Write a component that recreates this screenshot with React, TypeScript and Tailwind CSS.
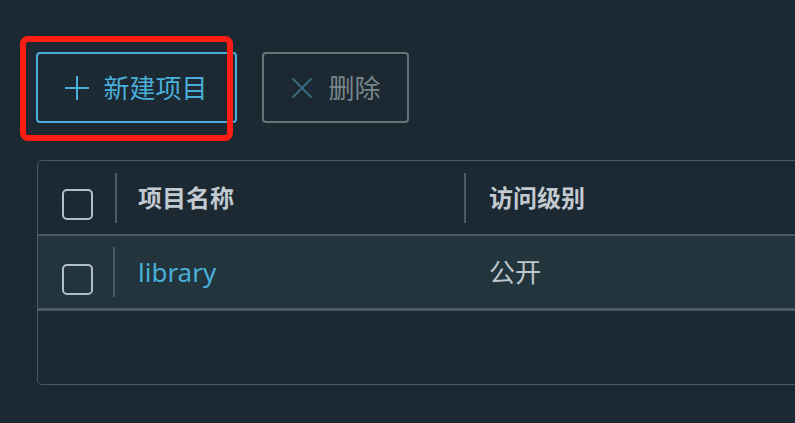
const font = { fontFamily: '"Noto Sans", "Noto Sans CJK SC", sans-serif' };

const Checkbox = () => (
  <div className="mt-[14px] ml-[24px] h-[31px] w-[31px] shrink-0 rounded-[5px] border-2 border-[#b3bfc6]"></div>
);

const Divider = () => <div className="h-[50px] w-[2px] shrink-0 bg-[#4b5a66]"></div>;

const App = () => {
  return (
    <div className="relative h-[423px] w-[795px] overflow-hidden bg-[#1c2832] pl-[36px] pt-[52px]" style={font}>
      {/* action buttons */}
      <div className="flex gap-[25px]">
        <button className="flex h-[71px] w-[201px] items-center justify-center gap-[14px] rounded-[4px] border-2 border-[#49afd9] text-[26px] text-[#49afd9]">
          <svg width="24" height="24" viewBox="0 0 24 24" fill="none" stroke="#49afd9" strokeWidth="2">
            <path d="M12 0v24M0 12h24" />
          </svg>
          <span className="leading-none">新建项目</span>
        </button>
        <button className="flex h-[71px] w-[147px] items-center justify-center gap-[14px] rounded-[4px] border-2 border-[#687379] text-[26px] text-[#7b868c]">
          <svg width="24" height="24" viewBox="0 0 24 24" fill="none" stroke="#3b6a81" strokeWidth="2">
            <path d="M2.5 2.5l19 19M21.5 2.5l-19 19" />
          </svg>
          <span className="leading-none">删除</span>
        </button>
      </div>

      {/* datagrid */}
      <div className="ml-px mt-[37px] w-[820px] rounded-[5px] border border-[#4b5a66]">
        <div className="flex h-[75px] items-center border-b-2 border-[#4b5a66] text-[24px] font-bold text-[#c1cad0]">
          <div className="w-[77px] shrink-0 self-stretch flex items-center">
            <Checkbox />
          </div>
          <Divider />
          <div className="w-[347px] shrink-0 pl-[21px]">项目名称</div>
          <Divider />
          <div className="pl-[23px]">访问级别</div>
        </div>
        <div className="flex h-[75px] items-center border-b-[3px] border-[#4b5a66] bg-[#22343c] text-[26px]">
          <div className="w-[75px] shrink-0 self-stretch flex items-center">
            <Checkbox />
          </div>
          <Divider />
          <div className="w-[351px] shrink-0 pl-[23px] text-[#49afd9]">library</div>
          <div className="pl-[23px] text-[#bcc6cc]">公开</div>
        </div>
        <div className="h-[73px]"></div>
      </div>

      {/* annotation */}
      <div className="absolute left-[20px] top-[36px] h-[105px] w-[213px] rounded-[8px] border-[6px] border-[#fd1d12]"></div>
    </div>
  );
};

export default App;
